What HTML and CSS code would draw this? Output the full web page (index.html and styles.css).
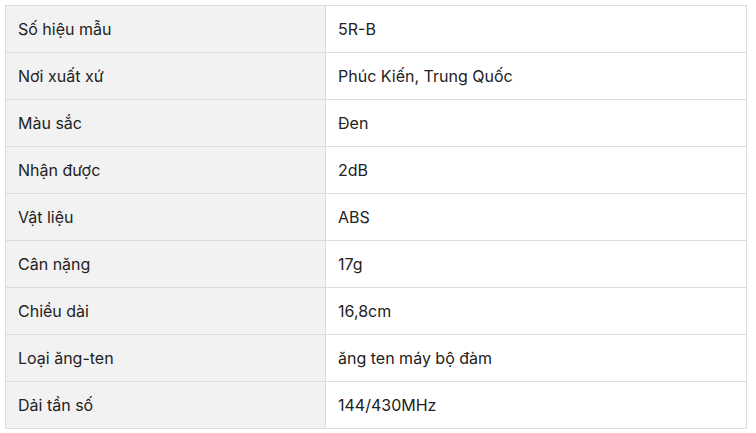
FILE: index.html
```html
<!DOCTYPE html>
<html lang="vi">
<head>
<meta charset="utf-8">
<link rel="stylesheet" href="styles.css">
</head>
<body>
<table class="spec">
<tbody>
<tr><td class="k">Số hiệu mẫu</td><td class="v">5R-B</td></tr>
<tr><td class="k">Nơi xuất xứ</td><td class="v">Phúc Kiến, Trung Quốc</td></tr>
<tr><td class="k">Màu sắc</td><td class="v">Đen</td></tr>
<tr><td class="k">Nhận được</td><td class="v">2dB</td></tr>
<tr><td class="k">Vật liệu</td><td class="v">ABS</td></tr>
<tr><td class="k">Cân nặng</td><td class="v">17g</td></tr>
<tr><td class="k">Chiều dài</td><td class="v">16,8cm</td></tr>
<tr><td class="k">Loại ăng-ten</td><td class="v">ăng ten máy bộ đàm</td></tr>
<tr><td class="k">Dải tần số</td><td class="v">144/430MHz</td></tr>
</tbody>
</table>
</body>
</html>
```
FILE: styles.css
```css
html, body { margin: 0; padding: 0; background: #fff; }
body { padding: 5px; font-family: Inter, "Noto Sans", sans-serif; font-size: 16px; color: #222; }
.spec { border-collapse: collapse; width: 742px; table-layout: fixed; }
.spec td { border: 1px solid #dcdcdc; padding: 12px 12px; height: 22px; line-height: 22px; vertical-align: middle; }
.spec .k { background: #f2f2f2; width: 295px; }
.spec .v { background: #fff; }
```
